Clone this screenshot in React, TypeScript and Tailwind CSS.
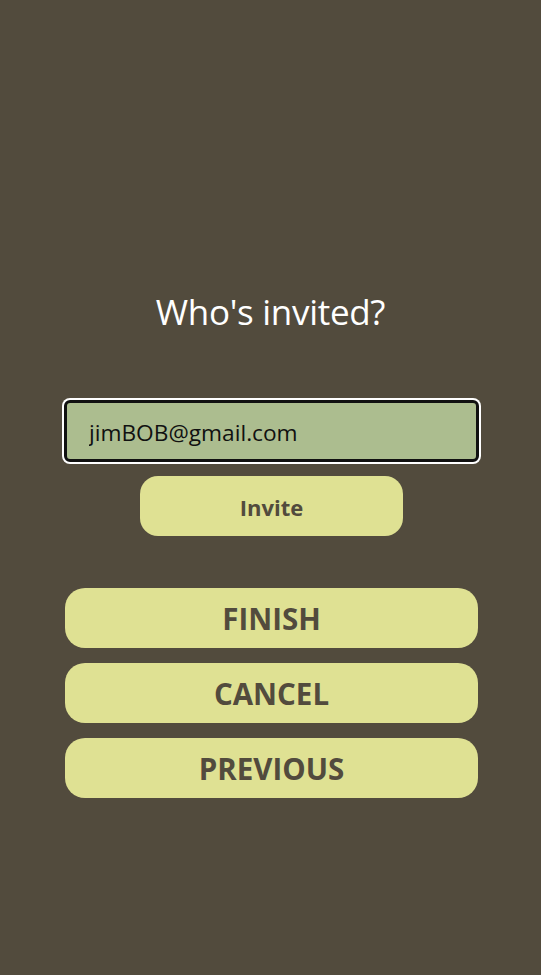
import { useState } from 'react';

const font = { fontFamily: '"Open Sans", "Noto Sans", sans-serif' };

export default function App() {
  const [email, setEmail] = useState('jimBOB@gmail.com');

  return (
    <div
      className="min-h-screen w-full bg-[#524b3d] flex flex-col items-center pt-[292px] font-['Open_Sans',sans-serif]"
      style={font}
    >
      <h1 className="text-white text-[35px] leading-[40px] tracking-[-0.3px]">Who's invited?</h1>

      <input
        type="text"
        value={email}
        onChange={(e) => setEmail(e.target.value)}
        className="mt-[68px] ml-[2px] w-[415px] h-[62px] rounded-[6px] border-[3px] border-[#111] bg-[#acbd8f] pl-[22px] pt-[3px] text-[22.7px] text-[#111] ring-2 ring-white outline-none"
      />

      <button className="mt-[14px] ml-[2px] w-[263px] h-[60px] rounded-[18px] bg-[#dfe193] pt-[3px] text-[#524b3d] text-[22px] font-bold">
        Invite
      </button>

      <div className="mt-[52px] ml-[2px] flex flex-col gap-[15px]">
        {['FINISH', 'CANCEL', 'PREVIOUS'].map((label) => (
          <button
            key={label}
            className="w-[413px] h-[60px] rounded-[20px] bg-[#dfe193] pt-[2px] text-[#524b3d] text-[29.5px] font-bold"
          >
            {label}
          </button>
        ))}
      </div>
    </div>
  );
}
